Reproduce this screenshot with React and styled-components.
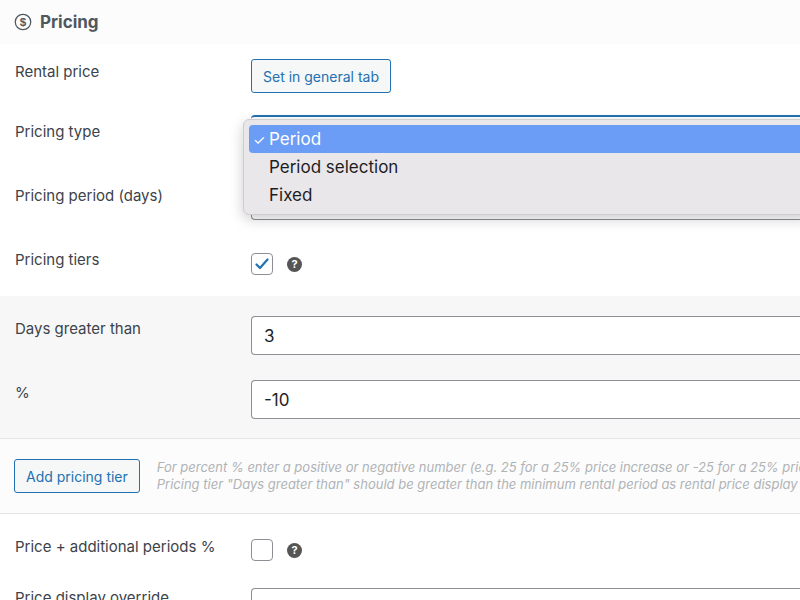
import React from 'react';
import styled, { createGlobalStyle } from 'styled-components';

const Global = createGlobalStyle`
  body { margin: 0; background: #fff; font-family: Inter, "Liberation Sans", sans-serif; color: #3c434a; }
`;

const Page = styled.div`
  width: 800px;
  height: 600px;
  overflow: hidden;
  position: relative;
  background: #fff;
`;

const Header = styled.div`
  height: 44px;
  display: flex;
  align-items: center;
  gap: 8px;
  padding-left: 14px;
  font-size: 17px;
  font-weight: 700;
  color: #50575e;
  background: #fcfcfc;
`;

const Row = styled.div`
  height: ${(p) => p.h}px;
  display: flex;
  align-items: flex-start;
  padding-top: ${(p) => p.pt || 0}px;
  box-sizing: border-box;
`;

const Label = styled.div`
  width: 236px;
  padding-left: 15px;
  font-size: 15px;
  line-height: 20px;
  margin-top: ${(p) => p.mt || 0}px;
  flex-shrink: 0;
`;

const Control = styled.div`
  flex: 1;
  display: flex;
  align-items: center;
  gap: 14px;
`;

const OutlineButton = styled.button`
  font: inherit;
  font-size: 14px;
  color: #2271b1;
  background: #f6f7f7;
  border: 1px solid #2271b1;
  border-radius: 3px;
  padding: 0 11px;
  height: ${(p) => p.h || 34}px;
  white-space: nowrap;
  flex-shrink: 0;
`;

const Input = styled.div`
  flex: 1;
  height: 39px;
  box-sizing: border-box;
  border: 1px solid #8c8f94;
  border-right: none;
  border-radius: 4px 0 0 4px;
  background: #fff;
  font-size: 17px;
  color: #1d2327;
  display: flex;
  align-items: center;
  padding-left: 12px;
`;

const Check = styled.div`
  width: 22px;
  height: 22px;
  box-sizing: border-box;
  border: 1px solid #8c8f94;
  border-radius: 4px;
  background: #fff;
  display: flex;
  align-items: center;
  justify-content: center;
`;

const Help = styled.div`
  width: 15px;
  height: 15px;
  border-radius: 50%;
  background: #555;
  color: #fff;
  font-size: 11px;
  font-weight: 700;
  display: flex;
  align-items: center;
  justify-content: center;
`;

const Tiers = styled.div`
  background: #f7f7f7;
  padding-top: 20px;
  height: 142px;
  box-sizing: border-box;
`;

const TierFoot = styled.div`
  height: 76px;
  border-top: 1px solid #e6e6e6;
  border-bottom: 1px solid #e6e6e6;
  background: #fcfcfc;
  display: flex;
  align-items: center;
  padding-left: 14px;
  gap: 17px;
  box-sizing: border-box;
`;

const Note = styled.div`
  font-style: italic;
  font-size: 13px;
  line-height: 17px;
  color: #b0b3b6;
  white-space: nowrap;
  min-width: 0;
  overflow: hidden;
`;

const Menu = styled.div`
  position: absolute;
  left: 243px;
  top: 119px;
  width: 570px;
  height: 96px;
  background: #e9e7ea;
  border: 1px solid #cfcdd0;
  border-radius: 6px;
  box-shadow: 0 4px 14px rgba(0, 0, 0, 0.2);
  padding: 5px;
  box-sizing: border-box;
  font-size: 17px;
  color: #1d1d1f;
`;

const MenuItem = styled.div`
  height: 28px;
  display: flex;
  align-items: center;
  padding-left: 20px;
  position: relative;
  border-radius: 4px;
  background: ${(p) => (p.active ? '#6b9cf6' : 'transparent')};
  color: ${(p) => (p.active ? '#fff' : '#1d1d1f')};
`;

const Tick = styled.span`
  position: absolute;
  left: 4px;
  font-size: 14px;
`;

const SelectEdge = styled.div`
  position: absolute;
  left: 251px;
  top: 115px;
  width: 560px;
  height: 6px;
  border-top: 2px solid #2271b1;
  border-radius: 4px 0 0 0;
`;

const CheckMark = () => (
  <svg width="16" height="16" viewBox="0 0 16 16">
    <path d="M2.5 8.5l3.5 3.5 7.5-8.5" fill="none" stroke="#2271b1" strokeWidth="2.2" strokeLinecap="round" strokeLinejoin="round" />
  </svg>
);

const Dollar = () => (
  <svg width="18" height="18" viewBox="0 0 20 20">
    <circle cx="10" cy="10" r="8.6" fill="none" stroke="#50575e" strokeWidth="1.4" />
    <text x="10" y="14.8" textAnchor="middle" fontSize="13" fontFamily="Liberation Sans" fill="#50575e">$</text>
  </svg>
);

export default function App() {
  return (
    <Page>
      <Global />
      <Header>
        <Dollar />
        Pricing
      </Header>
      <Row h={68} pt={15}>
        <Label mt={3}>Rental price</Label>
        <Control><OutlineButton>Set in general tab</OutlineButton></Control>
      </Row>
      <Row h={64} pt={10}>
        <Label>Pricing type</Label>
      </Row>
      <Row h={64} pt={10}>
        <Label>Pricing period (days)</Label>
        <Control><Input style={{ marginTop: -5 }} /></Control>
      </Row>
      <Row h={56} pt={10}>
        <Label>Pricing tiers</Label>
        <Control style={{ marginTop: 3 }}>
          <Check><CheckMark /></Check>
          <Help>?</Help>
        </Control>
      </Row>
      <Tiers>
        <Row h={64}>
          <Label mt={3}>Days greater than</Label>
          <Control><Input>3</Input></Control>
        </Row>
        <Row h={58}>
          <Label mt={3}>%</Label>
          <Control><Input>-10</Input></Control>
        </Row>
      </Tiers>
      <TierFoot>
        <OutlineButton h={34}>Add pricing tier</OutlineButton>
        <Note>
          For percent % enter a positive or negative number (e.g. 25 for a 25% price increase or -25 for a 25% price decrease)<br />
          Pricing tier "Days greater than" should be greater than the minimum rental period as rental price display
        </Note>
      </TierFoot>
      <Row h={60} pt={23}>
        <Label>Price + additional periods %</Label>
        <Control style={{ marginTop: 2 }}>
          <Check />
          <Help>?</Help>
        </Control>
      </Row>
      <Row h={60} pt={14}>
        <Label mt={0}>Price display override</Label>
        <Control><Input /></Control>
      </Row>
      <SelectEdge />
      <Menu>
        <MenuItem active><Tick>✓</Tick>Period</MenuItem>
        <MenuItem>Period selection</MenuItem>
        <MenuItem>Fixed</MenuItem>
      </Menu>
    </Page>
  );
}
